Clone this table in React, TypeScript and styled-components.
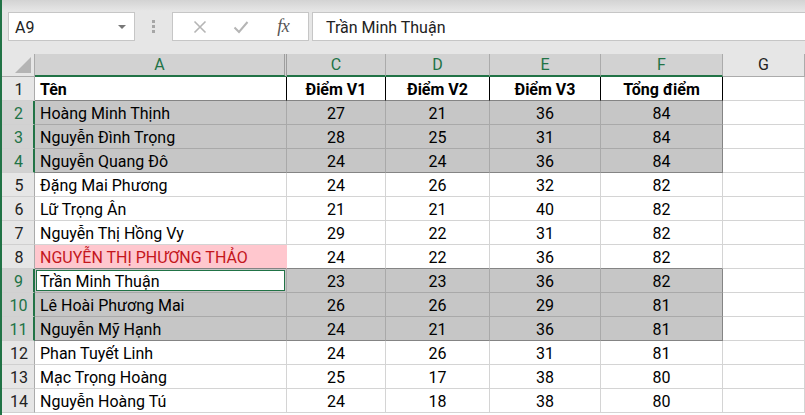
import React from 'react';
import styled, { createGlobalStyle, css } from 'styled-components';

const GREEN = '#217346';
const FONT = 'Roboto, "Noto Sans", sans-serif';

const Global = createGlobalStyle`
  html, body { margin: 0; padding: 0; background: #fff; }
  body { font-family: ${FONT}; }
  * { box-sizing: border-box; }
`;

const Window = styled.div`
  width: 805px;
  height: 415px;
  overflow: hidden;
  border-left: 2px solid ${GREEN};
  display: flex;
  flex-direction: column;
  background: #fff;
`;

const FormulaBar = styled.div`
  height: 54px;
  flex: none;
  padding: 12px 0 13px 6px;
  display: flex;
  align-items: stretch;
  background: linear-gradient(#d3d3d3 0px, #e6e6e6 11px);
`;

const NameBox = styled.div`
  width: 127px;
  background: #fff;
  border: 1px solid #c6c6c6;
  display: flex;
  align-items: center;
  justify-content: space-between;
  padding: 1px 8px 0 6px;
  font-size: 16px;
  color: #222;
`;

const DropArrow = styled.span`
  width: 0;
  height: 0;
  border-left: 4px solid transparent;
  border-right: 4px solid transparent;
  border-top: 4px solid #777;
`;

const Grip = styled.div`
  width: 37px;
  display: flex;
  flex-direction: column;
  align-items: center;
  justify-content: center;
  gap: 2px;
`;

const GripDot = styled.span`
  width: 3px;
  height: 3px;
  background: #a6a6a6;
`;

const ButtonBox = styled.div`
  width: 137px;
  background: #fff;
  border: 1px solid #c6c6c6;
  display: flex;
  align-items: center;
  justify-content: space-around;
  padding: 0 4px 0 6px;
  margin-right: 3px;
`;

const IconSlot = styled.span`
  width: 24px;
  display: flex;
  justify-content: center;
  align-items: center;
`;

const Fx = styled.span`
  font-family: "Liberation Serif", "DejaVu Serif", serif;
  font-style: italic;
  font-size: 18px;
  color: #555;
  letter-spacing: -0.5px;
`;

const FormulaInput = styled.div`
  flex: 1;
  margin-right: -2px;
  background: #fff;
  border: 1px solid #c6c6c6;
  display: flex;
  align-items: center;
  padding: 1px 0 0 13px;
  font-size: 16px;
  color: #222;
`;

const Grid = styled.div`
  display: grid;
  grid-template-columns: 33px 252px 99px 104px 111px 122px 1fr;
  grid-template-rows: 23px repeat(14, 24px);
  font-size: 16px;
`;

const Corner = styled.div`
  position: relative;
  background: #e6e6e6;
  border-right: 1px solid #ababab;
  border-bottom: 1px solid #ababab;
  &::after {
    content: '';
    position: absolute;
    right: 3px;
    bottom: 3px;
    width: 0;
    height: 0;
    border-left: 16px solid transparent;
    border-bottom: 16px solid #b4b4b4;
  }
`;

const ColHead = styled.div<{ $sel: boolean; $double?: boolean }>`
  display: flex;
  align-items: center;
  justify-content: center;
  padding-bottom: 1px;
  border-right: ${(p) => (p.$double ? '3px double #9e9e9e' : '1px solid #ababab')};
  ${(p) =>
    p.$sel
      ? css`
          background: #d2d2d2;
          color: ${GREEN};
          border-bottom: 2px solid ${GREEN};
        `
      : css`
          background: #e6e6e6;
          color: #222;
          border-bottom: 1px solid #ababab;
        `}
`;

const RowHead = styled.div<{ $sel: boolean }>`
  display: flex;
  align-items: center;
  justify-content: center;
  padding: 2px 0 0 2px;
  border-bottom: 1px solid #d0d0d0;
  ${(p) =>
    p.$sel
      ? css`
          background: #d2d2d2;
          color: ${GREEN};
          border-right: 2px solid ${GREEN};
        `
      : css`
          background: #e6e6e6;
          color: #222;
          border-right: 1px solid #ababab;
        `}
`;

type Kind = 'plain' | 'head' | 'sel' | 'hl' | 'active';

const Cell = styled.div<{
  $kind: Kind;
  $left?: boolean;
  $edgeRight?: boolean;
  $edgeBottom?: boolean;
}>`
  display: flex;
  align-items: center;
  justify-content: ${(p) => (p.$left ? 'flex-start' : 'center')};
  padding-top: 2px;
  padding-left: ${(p) => (p.$left ? '5px' : '0')};
  white-space: nowrap;
  overflow: hidden;
  color: #000;
  border-right: 1px solid #d4d4d4;
  border-bottom: 1px solid ${(p) => (p.$edgeBottom ? '#848484' : '#d4d4d4')};
  background: #fff;
  ${(p) =>
    p.$kind === 'head' &&
    css`
      font-weight: 700;
      border-right-color: #000;
    `}
  ${(p) =>
    (p.$kind === 'sel' || p.$kind === 'active') &&
    css`
      background: #c6c6c6;
      border-right-color: ${p.$edgeRight ? '#848484' : '#a9a9a9'};
      border-bottom-color: ${p.$edgeBottom ? '#848484' : '#a9a9a9'};
    `}
  ${(p) =>
    p.$kind === 'active' &&
    css`
      background: #fff;
      box-shadow: inset 0 0 0 1px #c6c6c6, inset 0 0 0 2px ${GREEN};
      padding-left: 5px;
    `}
  ${(p) =>
    p.$kind === 'hl' &&
    css`
      background: #ffc7ce;
      color: #c4161c;
      border-right-color: #ffc7ce;
    `}
`;

const rows: [string, number, number, number, number][] = [
  ['Hoàng Minh Thịnh', 27, 21, 36, 84],
  ['Nguyễn Đình Trọng', 28, 25, 31, 84],
  ['Nguyễn Quang Đô', 24, 24, 36, 84],
  ['Đặng Mai Phương', 24, 26, 32, 82],
  ['Lữ Trọng Ân', 21, 21, 40, 82],
  ['Nguyễn Thị Hồng Vy', 29, 22, 31, 82],
  ['NGUYỄN THỊ PHƯƠNG THẢO', 24, 22, 36, 82],
  ['Trần Minh Thuận', 23, 23, 36, 82],
  ['Lê Hoài Phương Mai', 26, 26, 29, 81],
  ['Nguyễn Mỹ Hạnh', 24, 21, 36, 81],
  ['Phan Tuyết Linh', 24, 26, 31, 81],
  ['Mạc Trọng Hoàng', 25, 17, 38, 80],
  ['Nguyễn Hoàng Tú', 24, 18, 38, 80],
];

const selectedRows = new Set([2, 3, 4, 9, 10, 11]);
const selBottoms = new Set([1, 4, 8, 11]);

const XIcon = () => (
  <svg width="14" height="14" viewBox="0 0 14 14">
    <path d="M1.5 1.5 L12.5 12.5 M12.5 1.5 L1.5 12.5" stroke="#b5b5b5" strokeWidth="1.6" fill="none" />
  </svg>
);

const CheckIcon = () => (
  <svg width="16" height="14" viewBox="0 0 16 14">
    <path d="M1.5 7.5 L6 12 L14.5 2" stroke="#b5b5b5" strokeWidth="2" fill="none" />
  </svg>
);

export default function App() {
  const header = ['Tên', 'Điểm V1', 'Điểm V2', 'Điểm V3', 'Tổng điểm'];
  return (
    <>
      <Global />
      <Window>
        <FormulaBar>
          <NameBox>
            <span>A9</span>
            <DropArrow />
          </NameBox>
          <Grip>
            <GripDot />
            <GripDot />
            <GripDot />
          </Grip>
          <ButtonBox>
            <IconSlot>
              <XIcon />
            </IconSlot>
            <IconSlot>
              <CheckIcon />
            </IconSlot>
            <IconSlot>
              <Fx>fx</Fx>
            </IconSlot>
          </ButtonBox>
          <FormulaInput>Trần Minh Thuận</FormulaInput>
        </FormulaBar>
        <Grid>
          <Corner />
          <ColHead $sel $double>A</ColHead>
          <ColHead $sel>C</ColHead>
          <ColHead $sel>D</ColHead>
          <ColHead $sel>E</ColHead>
          <ColHead $sel>F</ColHead>
          <ColHead $sel={false}>G</ColHead>

          <RowHead $sel={false}>1</RowHead>
          {header.map((h, i) => (
            <Cell key={h} $kind="head" $left={i === 0} $edgeBottom>
              {h}
            </Cell>
          ))}
          <Cell $kind="plain" />

          {rows.map((r, idx) => {
            const rn = idx + 2;
            const sel = selectedRows.has(rn);
            const edgeBottom = selBottoms.has(rn);
            return (
              <React.Fragment key={rn}>
                <RowHead $sel={sel}>{rn}</RowHead>
                {r.map((v, ci) => {
                  let kind: Kind = sel ? 'sel' : 'plain';
                  if (rn === 9 && ci === 0) kind = 'active';
                  if (rn === 8 && ci === 0) kind = 'hl';
                  return (
                    <Cell
                      key={ci}
                      $kind={kind}
                      $left={ci === 0}
                      $edgeRight={ci === 4}
                      $edgeBottom={edgeBottom}
                    >
                      {v}
                    </Cell>
                  );
                })}
                <Cell $kind="plain" />
              </React.Fragment>
            );
          })}
        </Grid>
      </Window>
    </>
  );
}
